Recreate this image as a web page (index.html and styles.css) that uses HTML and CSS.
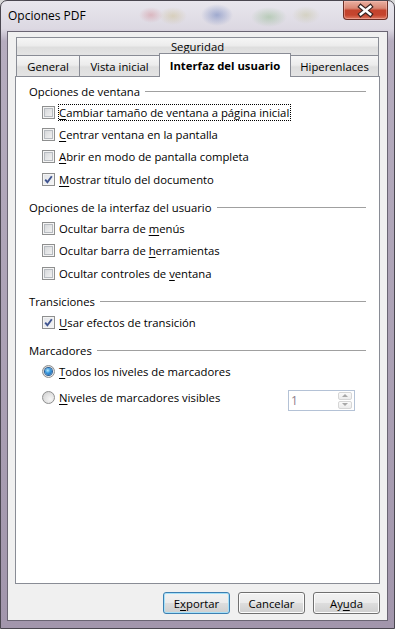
FILE: index.html
```html
<!DOCTYPE html>
<html lang="es">
<head>
  <meta charset="UTF-8">
  <title>Opciones PDF</title>
  <link rel="stylesheet" href="styles.css">
</head>
<body>

  <div class="window">
    <div class="titlebar">
      <span class="title">Opciones PDF</span>
      <button class="close-btn" aria-label="Cerrar">
        <svg width="45" height="18" viewBox="0 0 45 18">
          <path d="M17.5 5.5 L27.5 13.5 M27.5 5.5 L17.5 13.5" stroke="#3a2422" stroke-width="5" stroke-linecap="square"/>
          <path d="M17.5 5.5 L27.5 13.5 M27.5 5.5 L17.5 13.5" stroke="#ffffff" stroke-width="2.6" stroke-linecap="square"/>
        </svg>
      </button>
    </div>

    <div class="client">
      <div class="tabs">
        <div class="tab-row back">
          <div class="tab t-seg">Seguridad</div>
        </div>
        <div class="tab-row front">
          <div class="tab t-general">General</div>
          <div class="tab t-vista">Vista inicial</div>
          <div class="tab t-ui active">Interfaz del usuario</div>
          <div class="tab t-hiper">Hiperenlaces</div>
        </div>

        <div class="pane">
          <div class="group">
            <div class="group-title"><span>Opciones de ventana</span></div>
            <div class="opt"><span class="check"></span><span class="label focus"><u>C</u>ambiar tamaño de ventana a página inicial</span></div>
            <div class="opt"><span class="check"></span><span class="label"><u>C</u>entrar ventana en la pantalla</span></div>
            <div class="opt"><span class="check"></span><span class="label"><u>A</u>brir en modo de pantalla completa</span></div>
            <div class="opt">
              <span class="check on"><svg width="11" height="11" viewBox="0 0 11 11"><path d="M2.2 5.6 L4.4 8.2 L8.8 2.2" fill="none" stroke="#3f5490" stroke-width="1.9"/></svg></span>
              <span class="label"><u>M</u>ostrar título del documento</span>
            </div>
          </div>

          <div class="group">
            <div class="group-title"><span>Opciones de la interfaz del usuario</span></div>
            <div class="opt"><span class="check"></span><span class="label">Ocultar barra de <u>m</u>enús</span></div>
            <div class="opt"><span class="check"></span><span class="label">Ocultar barra de <u>h</u>erramientas</span></div>
            <div class="opt"><span class="check"></span><span class="label">Ocultar controles de <u>v</u>entana</span></div>
          </div>

          <div class="group">
            <div class="group-title"><span>Transiciones</span></div>
            <div class="opt">
              <span class="check on"><svg width="11" height="11" viewBox="0 0 11 11"><path d="M2.2 5.6 L4.4 8.2 L8.8 2.2" fill="none" stroke="#3f5490" stroke-width="1.9"/></svg></span>
              <span class="label"><u>U</u>sar efectos de transición</span>
            </div>
          </div>

          <div class="group">
            <div class="group-title"><span>Marcadores</span></div>
            <div class="opt"><span class="radio on"></span><span class="label"><u>T</u>odos los niveles de marcadores</span></div>
            <div class="opt spin-row">
              <span class="radio"></span><span class="label"><u>N</u>iveles de marcadores visibles</span>
              <div class="spin">
                <span class="spin-value">1</span>
                <span class="spin-arrows">
                  <span class="arrow up"></span>
                  <span class="arrow down"></span>
                </span>
              </div>
            </div>
          </div>
        </div>
      </div>

      <div class="buttons">
        <button class="btn default">E<u>x</u>portar</button>
        <button class="btn">Cancelar</button>
        <button class="btn">Ay<u>u</u>da</button>
      </div>
    </div>
  </div>

</body>
</html>
```

FILE: styles.css
```css
body {
  margin: 0;
  background: #d8d8d8;
  font-family: 'Open Sans', 'Noto Sans', sans-serif;
  font-size: 11.3px;
  color: #000;
}

.window {
  width: 395px;
  height: 629px;
  box-sizing: border-box;
  border: 1px solid #4a4750;
  border-radius: 7px 7px 0 0;
  display: flex;
  flex-direction: column;
  overflow: hidden;
  background:
    radial-gradient(ellipse 12px 8px at 150px 14px, rgba(200, 90, 100, 0.3), transparent),
    radial-gradient(ellipse 14px 9px at 172px 15px, rgba(190, 170, 90, 0.3), transparent),
    radial-gradient(ellipse 16px 11px at 216px 14px, rgba(60, 90, 170, 0.4), transparent),
    radial-gradient(ellipse 18px 10px at 268px 16px, rgba(90, 160, 80, 0.3), transparent),
    radial-gradient(ellipse 14px 9px at 305px 14px, rgba(170, 170, 90, 0.25), transparent),
    linear-gradient(#e8e6ed 0, #dcd8e2 28px, #b6adbf 40px, #a296ac 100%);
}

/* title bar */
.titlebar {
  height: 30px;
  flex: none;
  display: flex;
  align-items: flex-start;
  justify-content: space-between;
}

.title {
  padding-left: 7px;
  margin-top: 6px;
  font-size: 12px;
  color: #000;
}

.close-btn {
  width: 45px;
  height: 19px;
  margin-right: 6px;
  padding: 0;
  border: 1px solid #6c3027;
  border-top: none;
  border-radius: 0 0 4px 4px;
  background: linear-gradient(#eab0a2 0%, #d98774 40%, #c3432d 52%, #c5442e 78%, #de7b64 100%);
  box-shadow: inset 0 0 0 1px rgba(255, 200, 190, 0.45);
  display: flex;
}

/* client area */
.client {
  flex: 1;
  margin: 0 6px 7px 6px;
  border: 1px solid #6a6573;
  background: #f0f0f0;
  padding: 5px 7px 6px 7px;
  display: flex;
  flex-direction: column;
}

.tabs {
  flex: 1;
  display: flex;
  flex-direction: column;
}

.tab-row {
  display: flex;
  padding: 0 1px;
}

.tab-row.back {
  height: 18px;
}

.tab-row.front {
  height: 21px;
  align-items: flex-end;
}

.tab {
  box-sizing: border-box;
  height: 100%;
  border: 1px solid #898c95;
  border-bottom: none;
  background: linear-gradient(#f6f6f6 0%, #ececec 45%, #dedede 55%, #e4e4e4 100%);
  display: flex;
  align-items: center;
  justify-content: center;
  white-space: nowrap;
}

.t-seg { flex: 1; }
.t-general { width: 64px; }
.t-vista { width: 81px; margin-left: -1px; }
.t-ui { width: 132px; margin-left: -1px; }
.t-hiper { width: 89px; margin-left: -1px; }

.tab.active {
  position: relative;
  z-index: 2;
  height: 24px;
  margin-bottom: -1px;
  background: #fff;
  font-weight: bold;
  padding-bottom: 1px;
}

.pane {
  flex: 1;
  border: 1px solid #898c95;
  background: #fff;
  padding: 6px 13px 0 13px;
}

/* groups */
.group + .group {
  margin-top: 9px;
}

.group-title {
  height: 16px;
  display: flex;
  align-items: center;
  margin-bottom: 2px;
}

.group-title::after {
  content: "";
  flex: 1;
  border-top: 1px solid #a0a0a0;
  margin-left: 5px;
}

.opt {
  height: 22.33px;
  display: flex;
  align-items: center;
  padding-left: 13px;
}

.opt.spin-row {
  height: 30px;
}

.label {
  border: 1px dotted transparent;
  padding: 0 1px 0 0;
  line-height: 15px;
}

.label.focus {
  border-color: #000;
}

u {
  text-decoration-thickness: 1px;
  text-underline-offset: 2px;
}

.check {
  width: 13px;
  height: 13px;
  box-sizing: border-box;
  margin-right: 3px;
  border: 1px solid #8e8f8f;
  background: linear-gradient(135deg, #cfd1d4 0%, #e6e7e8 55%, #f7f7f7 100%);
  box-shadow: inset 0 0 0 1px #f4f4f4, inset 0 0 0 2px #b7bbc0;
  display: flex;
  align-items: center;
  justify-content: center;
  flex: none;
}

.check.on {
  background: linear-gradient(135deg, #e2e4e8 0%, #f4f5f6 100%);
  box-shadow: inset 0 0 0 1px #f4f4f4;
}

.radio {
  width: 13px;
  height: 13px;
  box-sizing: border-box;
  margin-right: 3px;
  border-radius: 50%;
  border: 1px solid #8e8f8f;
  background: radial-gradient(circle at 65% 65%, #f6f6f6 0%, #e0e0e0 55%, #c9c9c9 100%);
  display: flex;
  align-items: center;
  justify-content: center;
  flex: none;
}

.radio.on::after {
  content: "";
  width: 7px;
  height: 7px;
  border-radius: 50%;
  background: radial-gradient(circle at 40% 35%, #b8ecff 0%, #3c9be0 40%, #11569e 100%);
  box-shadow: 0 0 0 1px #2a5f96;
}

/* spin field */
.spin {
  margin-left: auto;
  margin-right: 11px;
  margin-top: 5px;
  width: 67px;
  height: 21px;
  box-sizing: border-box;
  border: 1px solid #b4c2d6;
  background: #fff;
  display: flex;
  align-items: center;
}

.spin-value {
  flex: 1;
  padding-left: 2px;
  color: #8f7f8d;
  font-size: 12px;
}

.spin-arrows {
  width: 14px;
  height: 17px;
  margin-right: 2px;
  display: flex;
  flex-direction: column;
  gap: 1px;
}

.arrow {
  flex: 1;
  box-sizing: border-box;
  border: 1px solid #d6d6d6;
  border-radius: 2px;
  background: linear-gradient(#fafafa, #ececec);
  display: flex;
  align-items: center;
  justify-content: center;
}

.arrow::after {
  content: "";
  border-left: 3px solid transparent;
  border-right: 3px solid transparent;
}

.arrow.up::after { border-bottom: 3px solid #a8a8a8; }
.arrow.down::after { border-top: 3px solid #a8a8a8; }

/* bottom buttons */
.buttons {
  margin-top: 8px;
  height: 22px;
  display: flex;
  justify-content: flex-end;
  gap: 8px;
}

.btn {
  width: 67px;
  height: 22px;
  padding: 0;
  font-family: inherit;
  font-size: inherit;
  color: #000;
  border: 1px solid #707070;
  border-radius: 3px;
  background: linear-gradient(#f2f2f2 0%, #ebebeb 48%, #dddddd 52%, #cfcfcf 100%);
  box-shadow: inset 0 0 0 1px #fcfcfc;
}

.btn.default {
  border-color: #3c7fb1;
  box-shadow: inset 0 0 0 1px #a6e0f8;
}
```
